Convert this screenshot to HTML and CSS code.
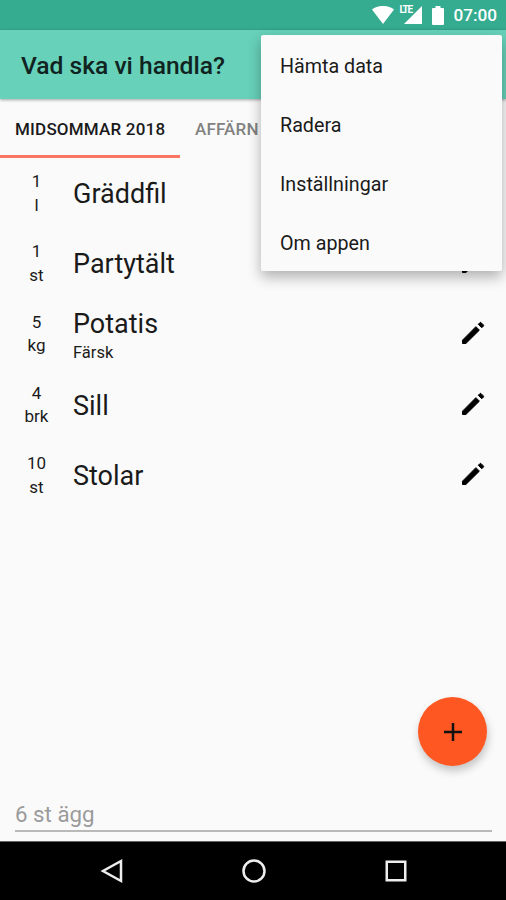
FILE: index.html
```html
<!DOCTYPE html>
<html lang="sv">
<head>
    <meta charset="UTF-8">
    <meta name="viewport" content="width=device-width, initial-scale=1.0">
    <title>Vad ska vi handla?</title>
    <link rel="stylesheet" href="styles.css">
</head>
<body>
    <svg width="0" height="0" class="defs">
        <symbol id="edit" viewBox="0 0 24 24">
            <path d="M3.600 17.700V20.400h2.700L17.100 9.700l-2.800-2.800L3.600 17.700zM20.300 6.500c.3-.3.3-.7 0-1l-1.800-1.800c-.3-.3-.7-.3-1 0l-1.300 1.300 2.800 2.800 1.300-1.300z"/>
        </symbol>
    </svg>

    <div class="status-bar">
        <svg class="wifi" width="22" height="18" viewBox="0 0 22 18"><path d="M0 3.5C6-1.2 16-1.2 22 3.5L11 18z"/></svg>
        <div class="signal">
            <span class="lte">LTE</span>
            <svg width="18" height="18" viewBox="0 0 18 18"><path d="M18 0v18H0z"/></svg>
        </div>
        <svg class="battery" width="12" height="19" viewBox="0 0 12 19"><path d="M3.5 0h5v2H11q1 0 1 1v15q0 1-1 1H1q-1 0-1-1V3q0-1 1-1h2.500z"/></svg>
        <span class="clock">07:00</span>
    </div>

    <header>Vad ska vi handla?</header>

    <div class="tabs">
        <div class="tab active">MIDSOMMAR 2018</div>
        <div class="tab">AFFÄRN</div>
    </div>

    <main>
        <div class="item">
            <div class="amount">1<br>l</div>
            <div class="name">Gräddfil</div>
            <svg class="edit"><use href="#edit"/></svg>
        </div>
        <div class="item">
            <div class="amount">1<br>st</div>
            <div class="name">Partytält</div>
            <svg class="edit"><use href="#edit"/></svg>
        </div>
        <div class="item tall">
            <div class="amount">5<br>kg</div>
            <div class="name">Potatis<small>Färsk</small></div>
            <svg class="edit"><use href="#edit"/></svg>
        </div>
        <div class="item tall">
            <div class="amount">4<br>brk</div>
            <div class="name">Sill</div>
            <svg class="edit"><use href="#edit"/></svg>
        </div>
        <div class="item">
            <div class="amount">10<br>st</div>
            <div class="name">Stolar</div>
            <svg class="edit"><use href="#edit"/></svg>
        </div>
    </main>

    <div class="add-row">
        <input type="text" class="add-input" placeholder="6 st ägg">
    </div>

    <nav>
        <svg width="24" height="26" viewBox="0 0 24 26"><path d="M21 3v20L3 13z"/></svg>
        <svg width="26" height="26" viewBox="0 0 26 26"><circle cx="13" cy="13" r="10.500"/></svg>
        <svg width="24" height="26" viewBox="0 0 24 26"><rect x="2.750" y="3.750" width="18.500" height="18.500"/></svg>
    </nav>

    <!-- Overlays -->
    <button class="fab" aria-label="Lägg till">
        <svg width="18" height="18" viewBox="0 0 18 18"><path d="M9 0v18M0 9h18"/></svg>
    </button>

    <div class="menu">
        <div class="menu-item">Hämta data</div>
        <div class="menu-item">Radera</div>
        <div class="menu-item">Inställningar</div>
        <div class="menu-item">Om appen</div>
    </div>
</body>
</html>
```
FILE: styles.css
```css
* {
    box-sizing: border-box;
}
body {
    margin: 0;
    height: 900px;
    position: relative;
    overflow: hidden;
    display: flex;
    flex-direction: column;
    font-family: Roboto, sans-serif;
    background-color: #fafafa;
    color: #1a1a1a;
}
.defs {
    position: absolute;
}
.status-bar {
    height: 30px;
    flex: none;
    display: flex;
    justify-content: flex-end;
    align-items: center;
    padding-right: 9px;
    background-color: #35ab90;
    color: #fff;
    fill: #fff;
}
.signal {
    position: relative;
    display: flex;
    margin: 0 10px 0 10px;
}
.lte {
    position: absolute;
    left: -5px;
    top: -1px;
    font-size: 10px;
    line-height: 10px;
    font-weight: 700;
    letter-spacing: -1.2px;
}
.clock {
    margin-left: 9px;
    font-size: 17.200px;
    font-weight: 500;
}
header {
    height: 69px;
    flex: none;
    display: flex;
    align-items: center;
    padding: 2px 0 0 21px;
    background-color: #67d1b9;
    color: #10231f;
    font-size: 24.600px;
    font-weight: 500;
    box-shadow: 0 1px 3px rgba(0, 0, 0, 0.35);
}
.tabs {
    height: 59px;
    flex: none;
    display: flex;
}
.tab {
    padding: 0 15px;
    line-height: 60px;
    font-size: 17px;
    font-weight: 500;
    letter-spacing: 0.2px;
    white-space: nowrap;
    color: #828282;
}
.tab.active {
    width: 180px;
    color: #1a1a1a;
    border-bottom: 3px solid #fb7662;
}
main {
    flex: 1;
}
.item {
    height: 70px;
    display: flex;
    align-items: center;
    padding-right: 18px;
}
.item.tall {
    height: 71px;
}
.amount {
    width: 73px;
    padding-top: 1px;
    text-align: center;
    font-size: 17px;
    line-height: 23.500px;
}
.name {
    flex: 1;
    padding-top: 2px;
    font-size: 27px;
    line-height: 32px;
}
.name small {
    display: block;
    margin-bottom: -4px;
    font-size: 16.500px;
    line-height: 26px;
}
.edit {
    width: 30px;
    height: 30px;
    margin-bottom: 2px;
    fill: #000;
    stroke: #000;
    stroke-width: 0.8;
    stroke-linejoin: round;
}
.add-row {
    height: 53px;
    flex: none;
    padding: 0 14px 0 15px;
}
.add-input {
    display: block;
    width: 100%;
    height: 44px;
    padding: 9px 0 0;
    border: none;
    border-bottom: 2px solid #b9b9b9;
    background: none;
    font-family: inherit;
    font-size: 22.300px;
}
.add-input::placeholder {
    color: #9b9b9b;
}
nav {
    height: 59px;
    flex: none;
    display: flex;
    justify-content: center;
    align-items: center;
    gap: 117px;
    padding-left: 2px;
    border-top: 1px solid #666;
    background-color: #000;
    fill: none;
    stroke: #eee;
    stroke-width: 2.500;
}
.fab {
    position: absolute;
    left: 418px;
    top: 697px;
    width: 69px;
    height: 69px;
    display: flex;
    justify-content: center;
    align-items: center;
    border: none;
    border-radius: 50%;
    background-color: #ff5722;
    stroke: #111;
    stroke-width: 2.500;
    box-shadow: 1px 5px 8px rgba(0, 0, 0, 0.22);
}
.menu {
    position: absolute;
    left: 261px;
    top: 35px;
    width: 241px;
    height: 236px;
    border-radius: 2px;
    background-color: #fafafa;
    box-shadow: 0 6px 14px rgba(0, 0, 0, 0.3);
}
.menu-item {
    height: 59px;
    padding-left: 19px;
    line-height: 63px;
    font-size: 19.700px;
}
```
